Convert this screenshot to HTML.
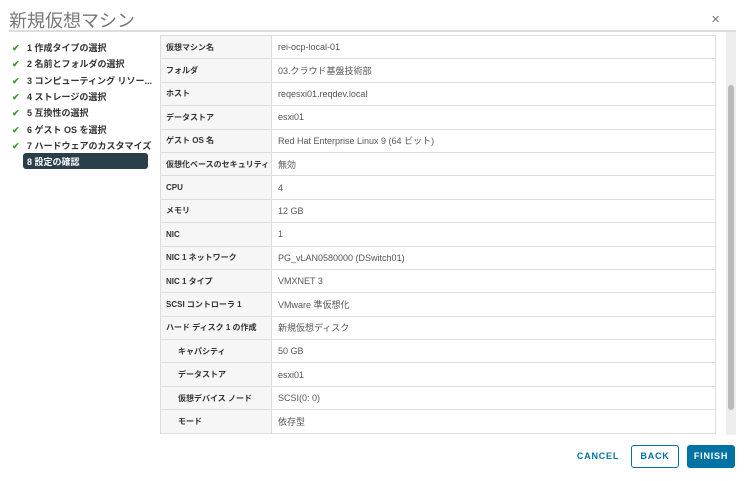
<!DOCTYPE html>
<html><head><meta charset="utf-8"><style>
*{box-sizing:border-box;margin:0;padding:0}
body{width:747px;height:481px;background:#fff;font-family:"Liberation Sans","Noto Sans CJK JP",sans-serif;position:relative;overflow:hidden;color:#333}
.title{position:absolute;left:9px;top:7px;font-size:18px;color:#777;font-weight:normal}
.close{position:absolute;left:711px;top:13px;font-size:11px;color:#777}
.hr{position:absolute;left:9px;top:30px;width:727px;height:2px;background:#ddd}
.nav{position:absolute;left:12px;font-size:9px;font-weight:bold;color:#333;white-space:nowrap}
.nav .c{color:#3c9a2e;display:inline-block;width:15px;font-size:9px}
.sel{position:absolute;left:23px;top:153px;width:125px;height:16px;background:#2b3e4c;border-radius:3px;color:#fff;font-size:9px;font-weight:bold;padding:2px 4px}
table{position:absolute;left:160px;top:35px;width:556px;border-collapse:collapse;font-size:9px;table-layout:fixed}
td{height:23.4px;border:1px solid #ddd;padding:0 6px;white-space:nowrap;overflow:hidden;vertical-align:middle}
td:first-child{width:111px;background:#f6f6f6;font-weight:bold;font-size:8px;color:#333;padding:0 5px}
td:last-child{color:#555}
.ind{padding-left:17px!important}
.track{position:absolute;left:726px;top:32px;width:10px;height:403px;background:#eee}
.thumb{position:absolute;left:728px;top:85px;width:6px;height:325px;background:#bbb;border-radius:3px}
.btn{position:absolute;top:445px;height:23px;font-size:9px;font-weight:bold;letter-spacing:0.8px;text-align:center;line-height:23px;border-radius:3px}
</style></head><body>
<div class="title">新規仮想マシン</div>
<div class="close">✕</div>
<div class="hr"></div>
<div class="nav" style="top:41px"><span class="c">✔</span>1 作成タイプの選択</div>
<div class="nav" style="top:57px"><span class="c">✔</span>2 名前とフォルダの選択</div>
<div class="nav" style="top:74px"><span class="c">✔</span>3 コンピューティング リソー...</div>
<div class="nav" style="top:90px"><span class="c">✔</span>4 ストレージの選択</div>
<div class="nav" style="top:106px"><span class="c">✔</span>5 互換性の選択</div>
<div class="nav" style="top:123px"><span class="c">✔</span>6 ゲスト OS を選択</div>
<div class="nav" style="top:139px"><span class="c">✔</span>7 ハードウェアのカスタマイズ</div>
<div class="sel">8 設定の確認</div>
<table>
<tr><td>仮想マシン名</td><td>rei-ocp-local-01</td></tr>
<tr><td>フォルダ</td><td>03.クラウド基盤技術部</td></tr>
<tr><td>ホスト</td><td>reqesxi01.reqdev.local</td></tr>
<tr><td>データストア</td><td>esxi01</td></tr>
<tr><td>ゲスト OS 名</td><td>Red Hat Enterprise Linux 9 (64 ビット)</td></tr>
<tr><td>仮想化ベースのセキュリティ</td><td>無効</td></tr>
<tr><td>CPU</td><td>4</td></tr>
<tr><td>メモリ</td><td>12 GB</td></tr>
<tr><td>NIC</td><td>1</td></tr>
<tr><td>NIC 1 ネットワーク</td><td>PG_vLAN0580000 (DSwitch01)</td></tr>
<tr><td>NIC 1 タイプ</td><td>VMXNET 3</td></tr>
<tr><td>SCSI コントローラ 1</td><td>VMware 準仮想化</td></tr>
<tr><td>ハード ディスク 1 の作成</td><td>新規仮想ディスク</td></tr>
<tr><td class="ind">キャパシティ</td><td>50 GB</td></tr>
<tr><td class="ind">データストア</td><td>esxi01</td></tr>
<tr><td class="ind">仮想デバイス ノード</td><td>SCSI(0: 0)</td></tr>
<tr><td class="ind">モード</td><td>依存型</td></tr>
</table>
<div class="track"></div><div class="thumb"></div>
<div class="btn" style="left:573px;width:50px;color:#0072a3">CANCEL</div>
<div class="btn" style="left:631px;width:48px;border:1px solid #0072a3;color:#0072a3;line-height:21px">BACK</div>
<div class="btn" style="left:687px;width:48px;background:#0072a3;color:#fff">FINISH</div>
</body></html>
